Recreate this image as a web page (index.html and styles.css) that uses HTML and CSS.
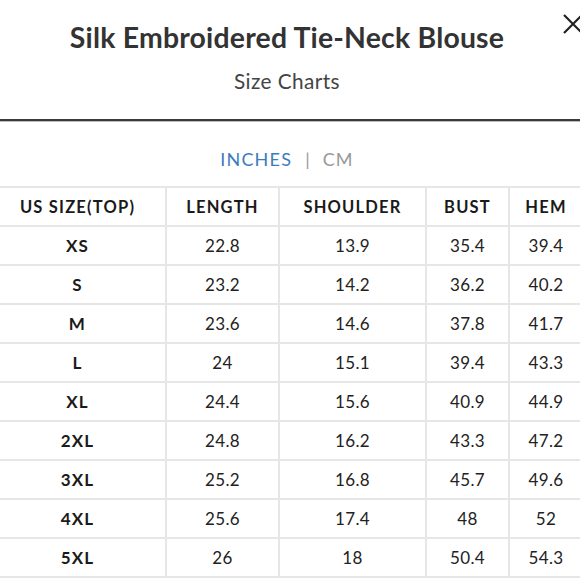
FILE: index.html
```html
<!DOCTYPE html>
<html lang="en">
<head>
<meta charset="utf-8">
<title>Size Charts</title>
<link rel="stylesheet" href="styles.css">
</head>
<body>
<div class="page">
  <header class="head">
    <h1 class="title">Silk Embroidered Tie-Neck Blouse</h1>
    <p class="subtitle">Size Charts</p>
    <svg class="close" width="22" height="22" viewBox="0 0 22 22" aria-label="Close">
      <path d="M2 2 L20 20 M20 2 L2 20" stroke="#222" stroke-width="2.2" fill="none"/>
    </svg>
  </header>
  <div class="rule"></div>
  <nav class="tabs">
    <span class="tab active">INCHES</span>
    <span class="sep">|</span>
    <span class="tab">CM</span>
  </nav>
  <div class="grid">
    <div class="cell th first">US SIZE(TOP)</div><div class="cell th">LENGTH</div><div class="cell th">SHOULDER</div><div class="cell th">BUST</div><div class="cell th">HEM</div>
    <div class="cell sz first">XS</div><div class="cell">22.8</div><div class="cell">13.9</div><div class="cell">35.4</div><div class="cell">39.4</div>
    <div class="cell sz first">S</div><div class="cell">23.2</div><div class="cell">14.2</div><div class="cell">36.2</div><div class="cell">40.2</div>
    <div class="cell sz first">M</div><div class="cell">23.6</div><div class="cell">14.6</div><div class="cell">37.8</div><div class="cell">41.7</div>
    <div class="cell sz first">L</div><div class="cell">24</div><div class="cell">15.1</div><div class="cell">39.4</div><div class="cell">43.3</div>
    <div class="cell sz first">XL</div><div class="cell">24.4</div><div class="cell">15.6</div><div class="cell">40.9</div><div class="cell">44.9</div>
    <div class="cell sz first">2XL</div><div class="cell">24.8</div><div class="cell">16.2</div><div class="cell">43.3</div><div class="cell">47.2</div>
    <div class="cell sz first">3XL</div><div class="cell">25.2</div><div class="cell">16.8</div><div class="cell">45.7</div><div class="cell">49.6</div>
    <div class="cell sz first">4XL</div><div class="cell">25.6</div><div class="cell">17.4</div><div class="cell">48</div><div class="cell">52</div>
    <div class="cell sz first">5XL</div><div class="cell">26</div><div class="cell">18</div><div class="cell">50.4</div><div class="cell">54.3</div>
  </div>
</div>
</body>
</html>
```

FILE: styles.css
```css
html, body {
  margin: 0;
  padding: 0;
  background: #fff;
}
body {
  width: 580px;
  height: 580px;
  overflow: hidden;
  font-family: Lato, "Liberation Sans", sans-serif;
  color: #222;
}
.page {
  position: relative;
  width: 580px;
}
.head {
  position: relative;
  height: 119px;
  display: flex;
  flex-direction: column;
  align-items: center;
  padding-right: 6px;
}
.title {
  margin: 19px 0 0;
  font-size: 28.4px;
  line-height: 36px;
  font-weight: 700;
  color: #333;
  letter-spacing: 0.2px;
}
.subtitle {
  margin: 13px 0 0;
  font-size: 20.8px;
  line-height: 26px;
  color: #444;
  letter-spacing: 0.4px;
}
.close {
  position: absolute;
  left: 562px;
  top: 13px;
}
.rule {
  height: 2px;
  background: #3a3a3a;
  border-bottom: 1px solid #bdbdbd;
}
.tabs {
  display: flex;
  justify-content: center;
  align-items: center;
  gap: 13px;
  height: 64px;
  padding-top: 9px;
  padding-right: 6px;
  box-sizing: border-box;
  font-size: 18px;
  letter-spacing: 1.2px;
}
.tab { color: #999; }
.tab.active { color: #3b7cc0; }
.sep { color: #999; letter-spacing: 0; }
.grid {
  display: grid;
  grid-template-columns: 165px 111px 145px 81px 72px;
  grid-auto-rows: 37px;
  gap: 2px;
  padding: 2px;
  margin-left: -2px;
  width: max-content;
  background: #e6e6e6;
}
.cell {
  background: #fff;
  display: flex;
  align-items: center;
  justify-content: center;
  font-size: 17px;
  color: #222;
  letter-spacing: 0.4px;
}
.first {
  padding-right: 10px;
}
.th, .sz {
  font-weight: 700;
  font-size: 16.5px;
  letter-spacing: 1.2px;
  color: #1a1a1a;
}
.sz {
  font-size: 17px;
}
```
